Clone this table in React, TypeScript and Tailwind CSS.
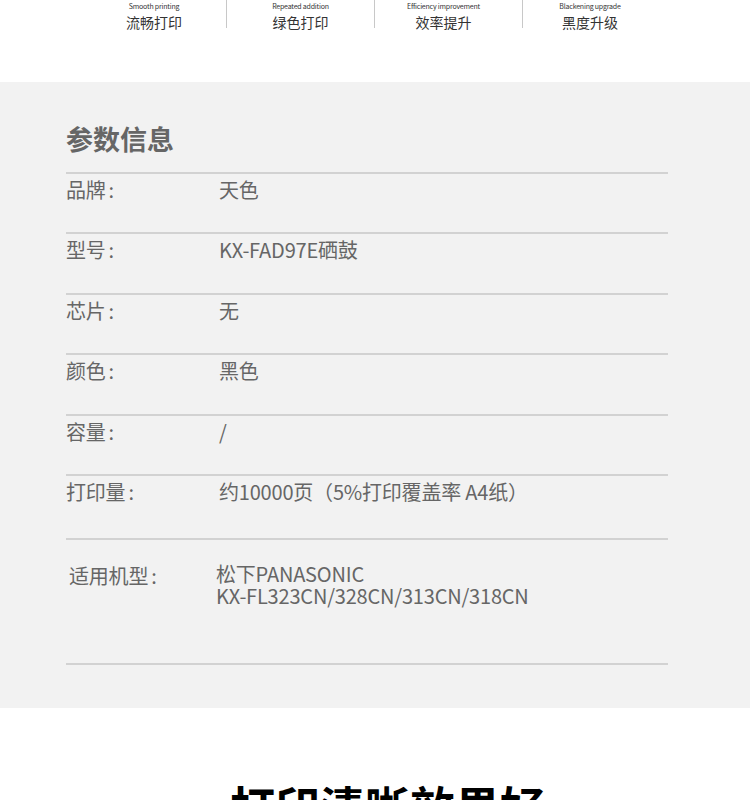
import React from "react";

const font = { fontFamily: '"Noto Sans CJK SC", "Noto Sans", sans-serif' };

const features = [
  { en: "Smooth printing", zh: "流畅打印", cls: "w-[145px] border-r border-[#c8c8c8]" },
  { en: "Repeated addition", zh: "绿色打印", cls: "w-[148px] border-r border-[#c8c8c8]" },
  { en: "Efficiency improvement", zh: "效率提升", cls: "w-[148px] border-r border-[#c8c8c8] pr-[10px]" },
  { en: "Blackening upgrade", zh: "黑度升级", cls: "w-[146px] pr-[12px]" },
];

const rows = [
  { k: "品牌", v: "天色", h: "h-[60px]" },
  { k: "型号", v: "KX-FAD97E硒鼓", h: "h-[61px]" },
  { k: "芯片", v: "无", h: "h-[60px]" },
  { k: "颜色", v: "黑色", h: "h-[61px]" },
  { k: "容量", v: "/", h: "h-[60px]" },
  { k: "打印量", v: "约10000页（5%打印覆盖率 A4纸）", h: "h-[64px]" },
];

export default function App() {
  return (
    <div className="w-[750px] h-[800px] overflow-hidden bg-white" style={font}>
      <div className="h-[82px] bg-white">
        <div className="flex ml-[82px] h-[28px]">
          {features.map((f) => (
            <div key={f.en} className={`flex flex-col items-center ${f.cls}`}>
              <div className="text-[7px] leading-[9px] mt-[2px] text-[#333] tracking-[-0.2px]">{f.en}</div>
              <div className="text-[14px] leading-[18px] mt-[2px] text-[#333]">{f.zh}</div>
            </div>
          ))}
        </div>
      </div>
      <div className="bg-[#f2f2f2] h-[626px] pl-[66px] pr-[82px]">
        <div className="h-[90px] flex items-end pb-[16px]">
          <div className="text-[27px] leading-[34px] font-bold text-[#666]">参数信息</div>
        </div>
        {rows.map((r) => (
          <div key={r.k} className={`flex border-t-2 border-[#d2d2d2] ${r.h} pt-[3px] text-[20px] leading-[26px] tracking-[-0.2px] text-[#666]`}>
            <div className="w-[153px]">
              {r.k}
              <span className="ml-[3px]">:</span>
            </div>
            <div>{r.v}</div>
          </div>
        ))}
        <div className="flex border-t-2 border-b-2 border-[#d2d2d2] h-[127px] pt-[23px] text-[20px] leading-[22px] tracking-[-0.2px] text-[#666]">
          <div className="w-[150px] pl-[3px] pt-[2px]">
            适用机型<span className="ml-[3px]">:</span>
          </div>
          <div>
            <div>松下PANASONIC</div>
            <div>KX-FL323CN/328CN/313CN/318CN</div>
          </div>
        </div>
      </div>
      <div className="pt-[70px] pl-[25px] text-center text-[45px] leading-[56px] font-bold text-black">
        打印清晰效果好
      </div>
    </div>
  );
}
